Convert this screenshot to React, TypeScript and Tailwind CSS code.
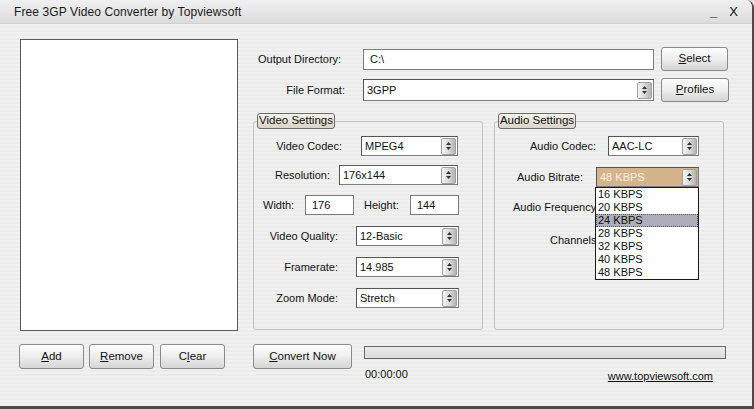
import React from "react";

const font = { fontFamily: '"Liberation Sans", Arial, sans-serif' };

function Btn({ children, className = "" }: { children: React.ReactNode; className?: string }) {
  return (
    <div
      className={
        "flex items-center justify-center rounded-[3px] border border-[#8a8a8a] bg-linear-to-b from-[#fdfdfd] via-[#eeeeee] to-[#d5d5d5] text-[11.5px] text-[#111] shadow-[inset_0_1px_0_#ffffff] " +
        className
      }
    >
      {children}
    </div>
  );
}

function Spin() {
  return (
    <div className="mr-[1px] flex h-[17px] w-[15px] flex-col items-center justify-center gap-[2px] rounded-[2px] border border-[#a0a0a0] bg-linear-to-r from-[#f4f4f4] via-[#dadada] to-[#b4b4b4]">
      <svg width="5" height="3" viewBox="0 0 5 3">
        <path d="M0 3 L2.5 0 L5 3Z" fill="#333" />
      </svg>
      <svg width="5" height="3" viewBox="0 0 5 3">
        <path d="M0 0 L2.5 3 L5 0Z" fill="#333" />
      </svg>
    </div>
  );
}

function Sel({
  value,
  className = "",
  tan = false,
}: {
  value: string;
  className?: string;
  tan?: boolean;
}) {
  return (
    <div
      className={
        "flex h-[20px] items-center justify-between border border-[#7c7c7c] border-l-[#555555] border-t-[#555555] pl-[3px] text-[11px] " +
        (tan ? "bg-[#d4b48b] text-[#f8efe3] " : "bg-white text-[#111] ") +
        className
      }
    >
      <span>{value}</span>
      <Spin />
    </div>
  );
}

function Legend({ children }: { children: React.ReactNode }) {
  return (
    <div className="absolute left-[3px] top-[-9px] flex h-[16px] w-[78px] items-center justify-center rounded-[3px] border border-[#6a6a6a] bg-linear-to-b from-[#f6f3ea] to-[#d8d4c9] text-[11.5px] text-[#111]">
      {children}
    </div>
  );
}

export default function App() {
  return (
    <div className="h-[409px] w-[754px] overflow-hidden bg-[#e4e4e4]" style={font}>
      <div className="flex h-[409px] w-[754px] flex-col overflow-hidden rounded-tr-[8px] border-b-[3px] border-r-[2px] border-[#4a4a4a] bg-[repeating-linear-gradient(180deg,#f1f1f1_0px,#f1f1f1_2px,#ebebeb_2px,#ebebeb_4px)]">
        {/* title bar */}
        <div className="flex h-[24px] shrink-0 items-center justify-between border-b border-[#cfcfcf] bg-linear-to-b from-[#f0f0f0] to-[#dcdcdc] pl-[14px] pr-[14px]">
          <span className="text-[12px] tracking-[0.1px] text-[#1a1a1a]">Free 3GP Video Converter by Topviewsoft</span>
          <div className="flex items-center gap-[12px] text-[13px] text-[#111]">
            <span className="font-bold leading-none">_</span>
            <span className="leading-none">X</span>
          </div>
        </div>

        {/* body */}
        <div className="flex pl-[20px] pt-[15px]">
          {/* left column */}
          <div className="flex w-[218px] flex-col">
            <div className="h-[292px] border border-[#5a5a5a] bg-white" />
            <div className="ml-[-1px] mt-[13px] flex">
              <Btn className="h-[25px] w-[65px]">
                <span><u>A</u>dd</span>
              </Btn>
              <Btn className="ml-[5px] h-[25px] w-[65px]">
                <span><u>R</u>emove</span>
              </Btn>
              <Btn className="ml-[6px] h-[25px] w-[65px]">
                <span>C<u>l</u>ear</span>
              </Btn>
            </div>
          </div>

          {/* right column */}
          <div className="ml-[15px] flex w-[476px] flex-col">
            {/* output dir */}
            <div className="mt-[8px] flex h-[24px] items-center">
              <div className="w-[110px] pl-[5px] text-[11px] text-[#111]">Output Directory:</div>
              <div className="flex h-[21px] w-[291px] items-center border border-[#7a7a7a] bg-white pl-[6px] text-[11px] text-[#111]">
                C:\
              </div>
              <Btn className="ml-[7px] h-[24px] w-[67px]">
                <span><u>S</u>elect</span>
              </Btn>
            </div>
            {/* file format */}
            <div className="mt-[7px] flex h-[24px] items-center">
              <div className="w-[110px] pr-[18px] text-right text-[11px] text-[#111]">File Format:</div>
              <Sel value="3GPP" className="h-[22px] w-[291px] pl-[1px]" />
              <Btn className="ml-[7px] h-[24px] w-[68px]">
                <span><u>P</u>rofiles</span>
              </Btn>
            </div>

            {/* groups */}
            <div className="mt-[19px] flex">
              {/* video */}
              <div className="relative flex h-[209px] w-[230px] flex-col rounded-[3px] border border-[#c0c0c0]">
                <Legend>Video Settings</Legend>
                <div className="mt-[14px] flex h-[20px] items-center">
                  <div className="w-[107px] pr-[19px] text-right text-[11px] text-[#111]">Video Codec:</div>
                  <Sel value="MPEG4" className="w-[97px]" />
                </div>
                <div className="mt-[9px] flex h-[20px] items-center">
                  <div className="w-[85px] pr-[9px] text-right text-[11px] text-[#111]">Resolution:</div>
                  <Sel value="176x144" className="w-[119px]" />
                </div>
                <div className="mt-[10px] flex h-[20px] items-center pl-[9px] text-[11px] text-[#111]">
                  <span className="w-[42px]">Width:</span>
                  <div className="flex h-[20px] w-[49px] items-center border border-[#7a7a7a] bg-white pl-[6px]">176</div>
                  <span className="ml-[10px] w-[46px]">Height:</span>
                  <div className="flex h-[20px] w-[49px] items-center border border-[#7a7a7a] bg-white pl-[6px]">144</div>
                </div>
                <div className="mt-[11px] flex h-[20px] items-center">
                  <div className="w-[102px] pr-[18px] text-right text-[11px] text-[#111]">Video Quality:</div>
                  <Sel value="12-Basic" className="w-[103px]" />
                </div>
                <div className="mt-[11px] flex h-[20px] items-center">
                  <div className="w-[102px] pr-[18px] text-right text-[11px] text-[#111]">Framerate:</div>
                  <Sel value="14.985" className="w-[103px]" />
                </div>
                <div className="mt-[11px] flex h-[20px] items-center">
                  <div className="w-[102px] pr-[18px] text-right text-[11px] text-[#111]">Zoom Mode:</div>
                  <Sel value="Stretch" className="w-[103px]" />
                </div>
              </div>

              {/* audio */}
              <div className="relative ml-[11px] flex h-[209px] w-[230px] flex-col rounded-[3px] border border-[#c0c0c0]">
                <Legend>Audio Settings</Legend>
                <div className="mt-[14px] flex h-[20px] items-center">
                  <div className="w-[113px] pr-[12px] text-right text-[11px] text-[#111]">Audio Codec:</div>
                  <Sel value="AAC-LC" className="w-[91px]" />
                </div>
                <div className="mt-[11px] flex h-[20px] items-center">
                  <div className="w-[101px] pr-[13px] text-right text-[11px] text-[#111]">Audio Bitrate:</div>
                  <Sel value="48 KBPS" tan className="w-[103px]" />
                </div>
                <div className="mt-[10px] flex h-[20px] items-center">
                  <div className="w-[100px] overflow-hidden whitespace-nowrap pl-[18px] text-[11px] text-[#111]">Audio Frequency</div>
                  <Sel value="" className="ml-[1px] w-[103px]" />
                </div>
                <div className="mt-[13px] flex h-[20px] items-center">
                  <div className="w-[100px] overflow-hidden whitespace-nowrap pl-[55px] text-[11px] text-[#111]">Channels</div>
                  <Sel value="" className="ml-[1px] w-[103px]" />
                </div>

                {/* open dropdown */}
                <div className="absolute left-[100px] top-[65px] z-10 flex w-[104px] flex-col border border-[#1a1a1a] bg-white text-[11px] text-[#111]">
                  <div className="flex h-[13px] items-center pl-[2px]">16 KBPS</div>
                  <div className="flex h-[13px] items-center pl-[2px]">20 KBPS</div>
                  <div className="flex h-[13px] items-center border border-dotted border-[#555] bg-[#adadbb] pl-[1px]">24 KBPS</div>
                  <div className="flex h-[13px] items-center pl-[2px]">28 KBPS</div>
                  <div className="flex h-[13px] items-center pl-[2px]">32 KBPS</div>
                  <div className="flex h-[13px] items-center pl-[2px]">40 KBPS</div>
                  <div className="flex h-[13px] items-center pl-[2px]">48 KBPS</div>
                </div>
              </div>
            </div>

            {/* bottom */}
            <div className="mt-[14px] flex">
              <Btn className="h-[25px] w-[99px]">
                <span><u>C</u>onvert Now</span>
              </Btn>
              <div className="ml-[12px] flex w-[362px] flex-col">
                <div className="mt-[2px] h-[13px] border border-[#666] bg-linear-to-b from-[#ececec] to-[#dcdcdc]" />
                <div className="flex items-start justify-between">
                  <span className="ml-[1px] mt-[7px] text-[11px] text-[#111]">00:00:00</span>
                  <span className="mr-[13px] mt-[9px] text-[11px] text-[#111] underline">www.topviewsoft.com</span>
                </div>
              </div>
            </div>
          </div>
        </div>
      </div>
    </div>
  );
}
